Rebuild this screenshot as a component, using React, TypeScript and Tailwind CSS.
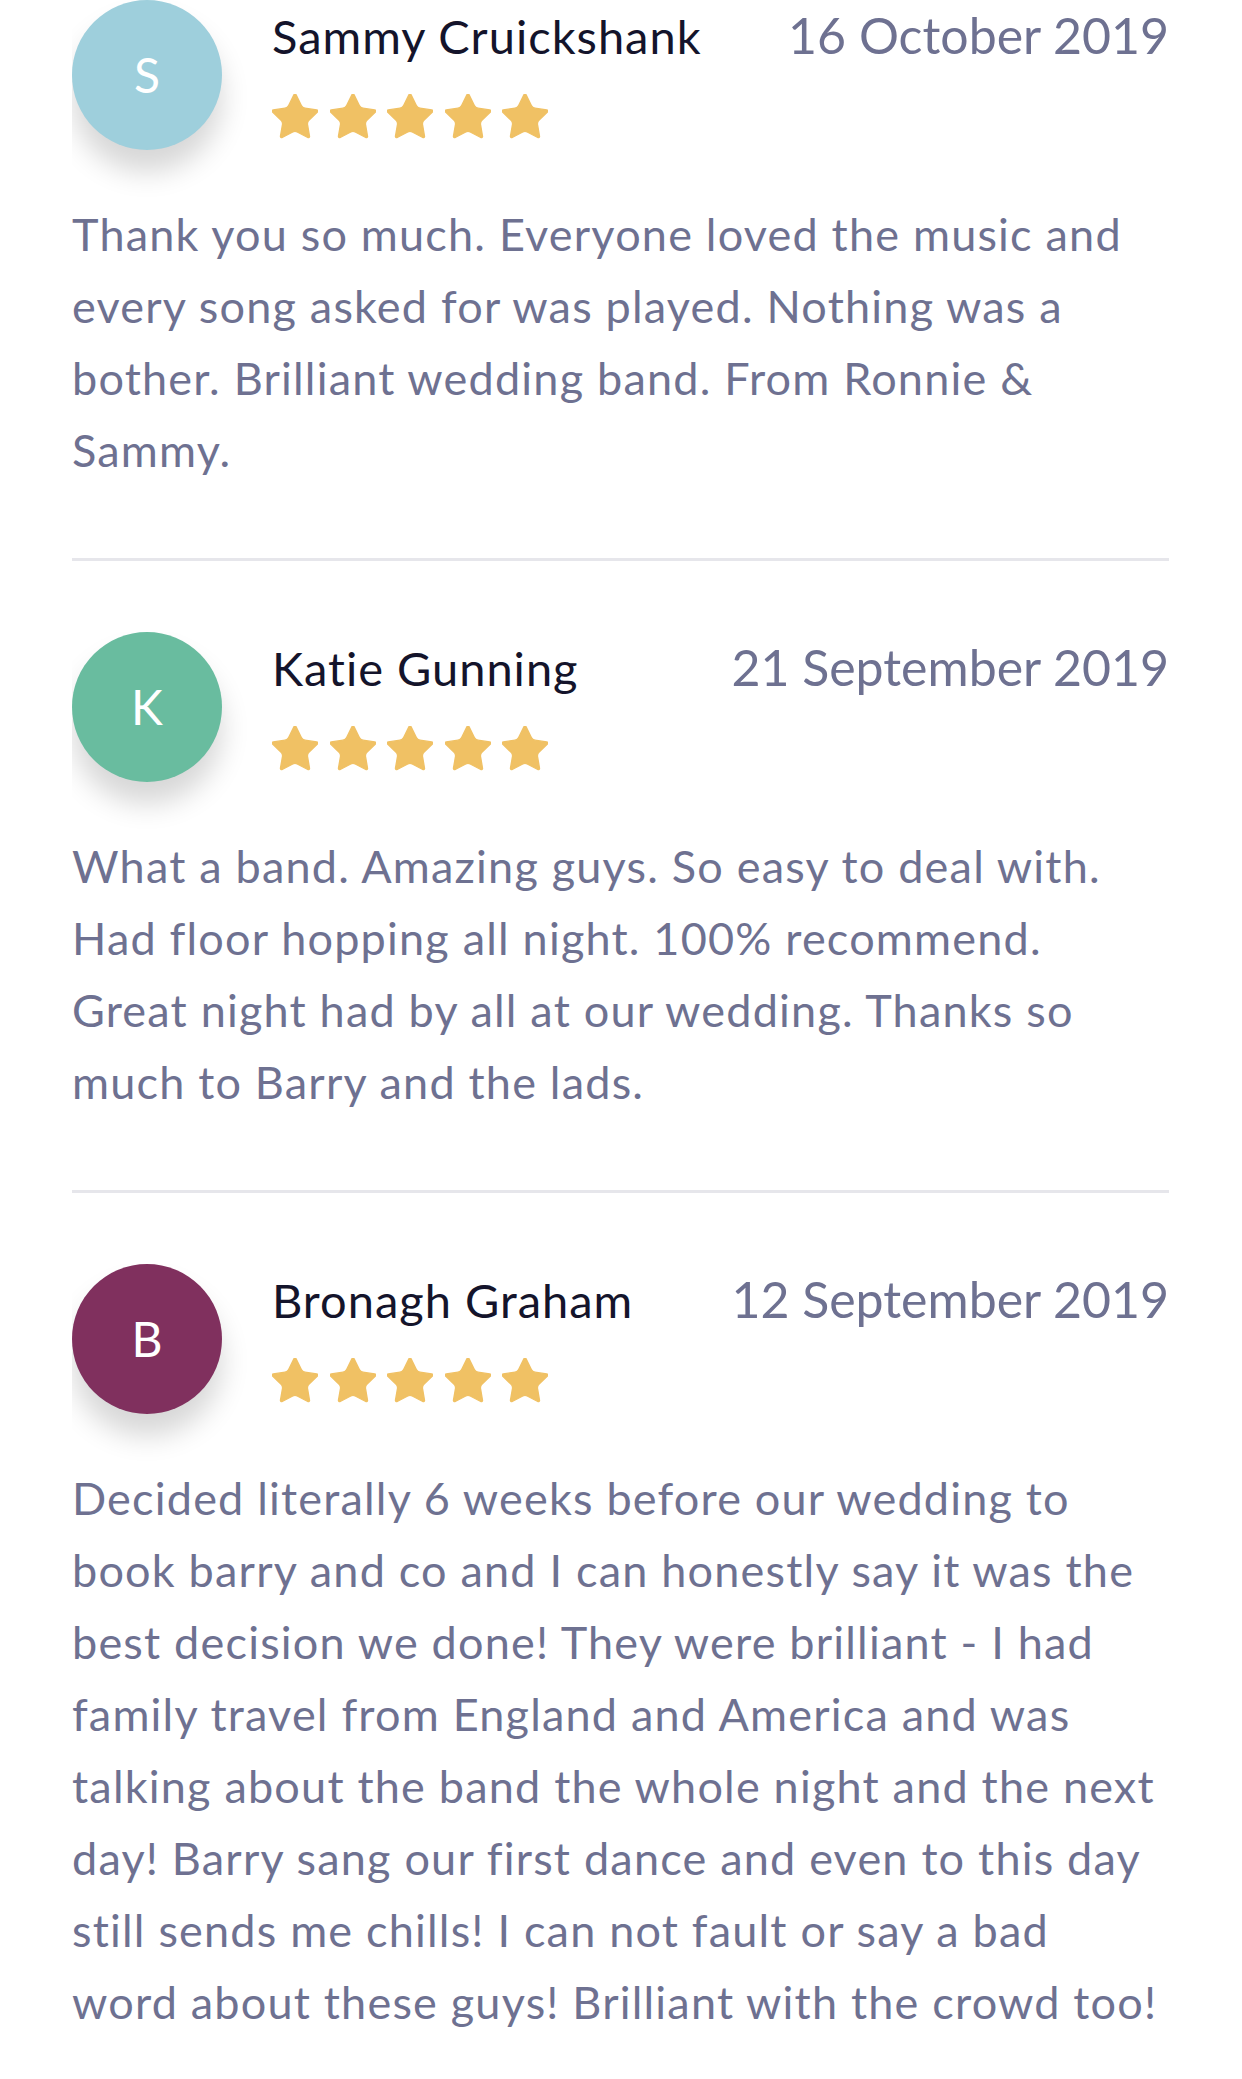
import React from "react";

type Review = {
  name: string;
  initial: string;
  color: string;
  date: string;
  text: string;
};

const reviews: Review[] = [
  {
    name: "Sammy Cruickshank",
    initial: "S",
    color: "bg-[#9ecfdc]",
    date: "16 October 2019",
    text: "Thank you so much. Everyone loved the music and every song asked for was played. Nothing was a bother. Brilliant wedding band. From Ronnie & Sammy.",
  },
  {
    name: "Katie Gunning",
    initial: "K",
    color: "bg-[#69bc9f]",
    date: "21 September 2019",
    text: "What a band. Amazing guys. So easy to deal with. Had floor hopping all night. 100% recommend. Great night had by all at our wedding. Thanks so much to Barry and the lads.",
  },
  {
    name: "Bronagh Graham",
    initial: "B",
    color: "bg-[#80305e]",
    date: "12 September 2019",
    text: "Decided literally 6 weeks before our wedding to book barry and co and I can honestly say it was the best decision we done! They were brilliant - I had family travel from England and America and was talking about the band the whole night and the next day! Barry sang our first dance and even to this day still sends me chills! I can not fault or say a bad word about these guys! Brilliant with the crowd too!",
  },
];

const Star = () => (
  <svg width="46" height="46" viewBox="1.9 1.9 20.2 20.2">
    <path
      d="M11.525 2.295a.53.53 0 0 1 .95 0l2.31 4.679a2.123 2.123 0 0 0 1.595 1.16l5.166.756a.53.53 0 0 1 .294.904l-3.736 3.638a2.123 2.123 0 0 0-.611 1.878l.882 5.14a.53.53 0 0 1-.771.56l-4.618-2.428a2.122 2.122 0 0 0-1.973 0L6.396 21.01a.53.53 0 0 1-.77-.56l.881-5.139a2.122 2.122 0 0 0-.611-1.879L2.16 9.795a.53.53 0 0 1 .294-.906l5.165-.755a2.122 2.122 0 0 0 1.597-1.16z"
      fill="#f0c164"
      stroke="#f0c164"
      strokeWidth="0.6"
      strokeLinejoin="round"
    />
  </svg>
);

const ReviewItem = ({ review, first }: { review: Review; first: boolean }) => {
  return (
    <div className={first ? "pb-[72px]" : "pt-[71px] pb-[72px]"}>
      <div className="flex">
        <div className="shrink-0 overflow-hidden pr-[50px] pb-[48px]">
          <div
            className={`flex h-[150px] w-[150px] items-center justify-center rounded-full ${review.color} shadow-[0_22px_28px_rgba(0,0,0,0.16)]`}
          >
            <span className="text-[48px] leading-none text-white">{review.initial}</span>
          </div>
        </div>
        <div className="flex-1">
          <div className="mt-[12px] flex items-baseline justify-between">
            <span className="text-[47px] leading-[46px] tracking-[1px] text-[#14142b]">{review.name}</span>
            <span className="text-[50px] leading-[46px] text-[#6e7191]">{review.date}</span>
          </div>
          <div className="mt-[35px] flex gap-[11.5px]">
            <Star />
            <Star />
            <Star />
            <Star />
            <Star />
          </div>
        </div>
      </div>
      <p className="pr-[6px] text-[45px] leading-[72px] tracking-[1.2px] text-[#6e7191]">{review.text}</p>
    </div>
  );
};

export default function App() {
  return (
    <div className="min-h-[2079px] w-[1242px] bg-white pl-[72px] pr-[73px] font-['Lato',sans-serif]">
      {reviews.map((r, i) => (
        <div key={r.name}>
          {i > 0 && <div className="h-[3px] bg-[#e6e6eb]" />}
          <ReviewItem review={r} first={i === 0} />
        </div>
      ))}
    </div>
  );
}
